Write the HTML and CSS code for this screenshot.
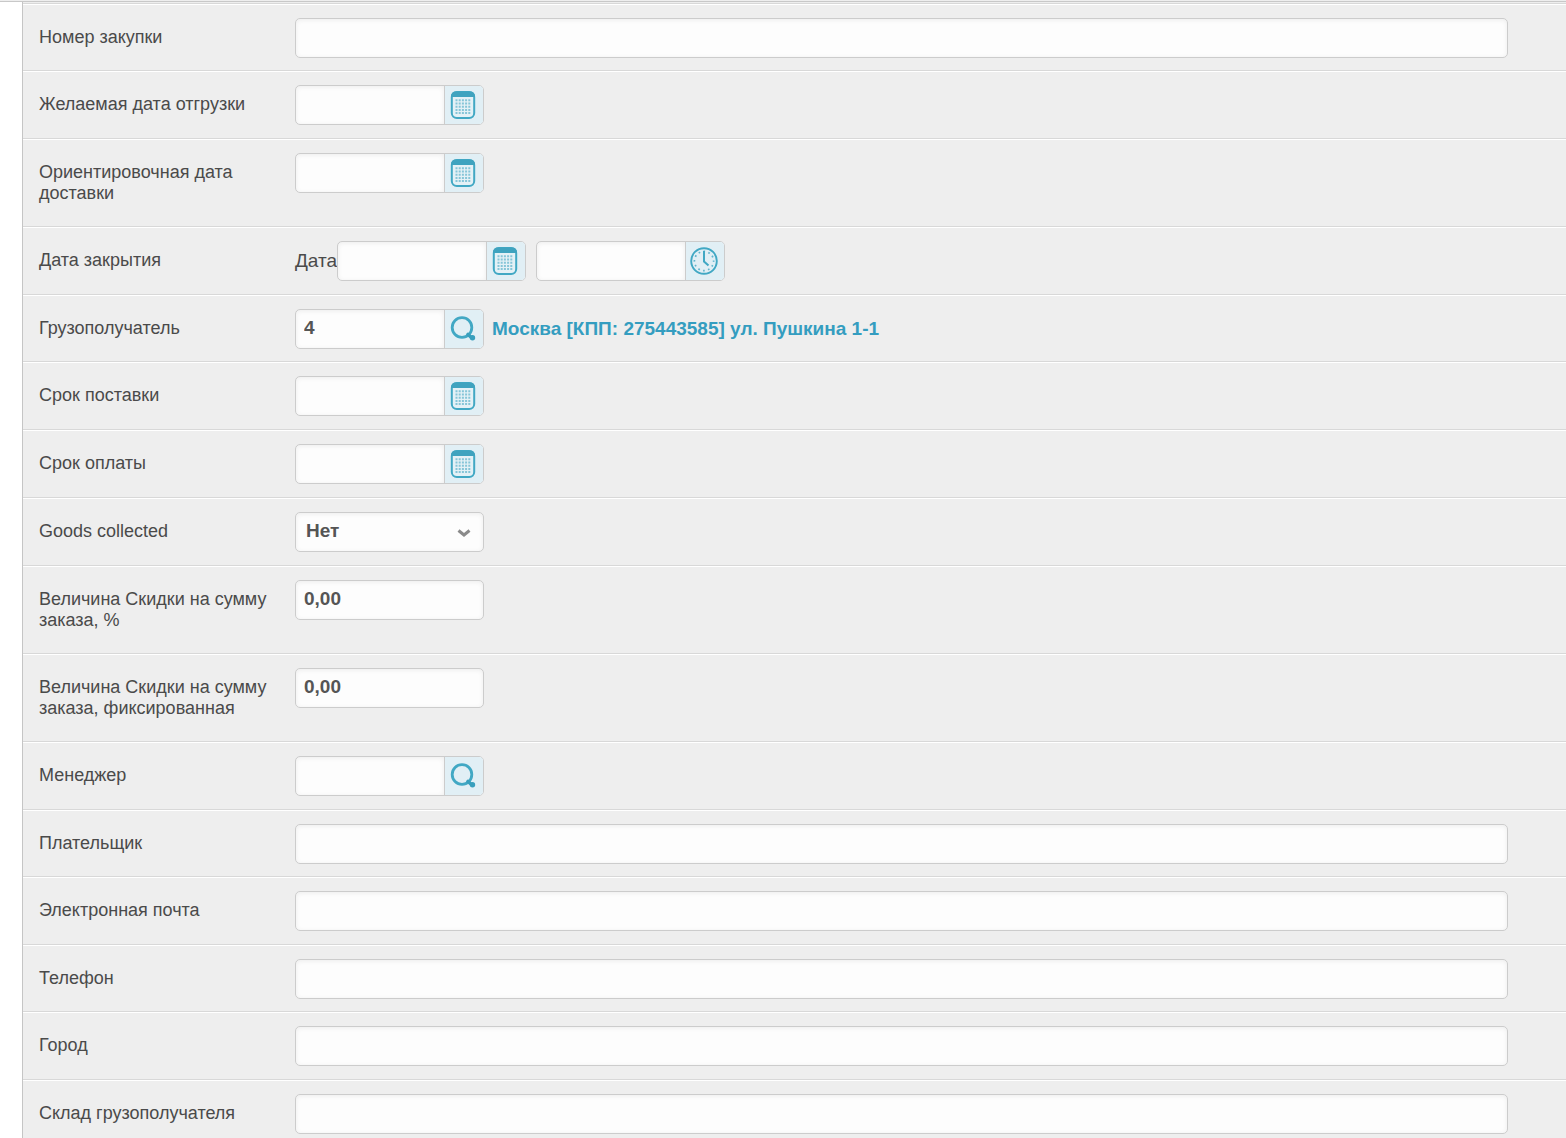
FILE: index.html
```
<!DOCTYPE html>
<html lang="ru">
<head>
  <meta charset="UTF-8">
  <meta name="viewport" content="width=device-width, initial-scale=1.0">
  <title>Заказ</title>
  <link rel="stylesheet" href="styles.css">
</head>
<body>

<svg class="sprite" aria-hidden="true">
  <defs>
    <symbol id="icon-calendar" viewBox="0 0 28 28">
      <rect x="2.8" y="1" width="22.4" height="26" rx="5" fill="#e4f1f6" stroke="#41a8c4" stroke-width="2"/>
      <path d="M2 6V5a4.500 4.500 0 0 1 4.500-4.500h15a4.500 4.500 0 0 1 4.500 4.500v1z" fill="#3fa3bf"/>
      <path d="M6.500 9.300h15M6.500 12.500h15M6.500 15.700h15M6.500 18.900h15M6.500 22.100h15" fill="none" stroke="#86c5d8" stroke-width="2" stroke-dasharray="2 1.200"/>
    </symbol>
    <symbol id="icon-clock" viewBox="0 0 28 28">
      <circle cx="14" cy="14" r="12.800" fill="none" stroke="#41a8c4" stroke-width="1.900"/>
      <circle cx="14" cy="14" r="9.600" fill="none" stroke="#62b4cc" stroke-width="1.700" stroke-dasharray="1.700 3.327" stroke-dashoffset="0.850"/>
      <path d="M14 4v10.500l4.500 4" fill="none" stroke="#41a8c4" stroke-width="2"/>
    </symbol>
    <symbol id="icon-search" viewBox="0 0 28 28">
      <circle cx="13" cy="12.500" r="9.800" fill="none" stroke="#41a8c4" stroke-width="2.800"/>
      <path d="M19 19.500l4 3.500" fill="none" stroke="#389fbd" stroke-width="3.600" stroke-linecap="round"/>
      <circle cx="23.500" cy="22.800" r="2.700" fill="#389fbd"/>
    </symbol>
  </defs>
</svg>

<div class="top-line"></div>

<form class="order-form">
  <div class="form-row compact">
    <label class="row-label" for="purchaseNumber">Номер закупки</label>
    <div class="row-field"><input type="text" id="purchaseNumber" class="text-input wide"></div>
  </div>

  <div class="form-row">
    <label class="row-label" for="shipDate">Желаемая дата отгрузки</label>
    <div class="row-field">
      <div class="input-group">
        <input type="text" id="shipDate">
        <button type="button" aria-label="Выбрать дату"><svg><use href="#icon-calendar"/></svg></button>
      </div>
    </div>
  </div>

  <div class="form-row">
    <label class="row-label" for="deliveryDate">Ориентировочная дата доставки</label>
    <div class="row-field">
      <div class="input-group">
        <input type="text" id="deliveryDate">
        <button type="button" aria-label="Выбрать дату"><svg><use href="#icon-calendar"/></svg></button>
      </div>
    </div>
  </div>

  <div class="form-row">
    <label class="row-label" for="closeDate">Дата закрытия</label>
    <div class="row-field">
      <label class="field-prefix" for="closeDate">Дата</label>
      <div class="input-group">
        <input type="text" id="closeDate">
        <button type="button" aria-label="Выбрать дату"><svg><use href="#icon-calendar"/></svg></button>
      </div>
      <div class="input-group time">
        <input type="text" id="closeTime" aria-label="Время закрытия">
        <button type="button" aria-label="Выбрать время"><svg><use href="#icon-clock"/></svg></button>
      </div>
    </div>
  </div>

  <div class="form-row compact">
    <label class="row-label" for="consignee">Грузополучатель</label>
    <div class="row-field">
      <div class="input-group">
        <input type="text" id="consignee" value="4">
        <button type="button" aria-label="Найти"><svg><use href="#icon-search"/></svg></button>
      </div>
      <a href="#" class="consignee-link">Москва [КПП: 275443585] ул. Пушкина 1-1</a>
    </div>
  </div>

  <div class="form-row">
    <label class="row-label" for="supplyTerm">Срок поставки</label>
    <div class="row-field">
      <div class="input-group">
        <input type="text" id="supplyTerm">
        <button type="button" aria-label="Выбрать дату"><svg><use href="#icon-calendar"/></svg></button>
      </div>
    </div>
  </div>

  <div class="form-row">
    <label class="row-label" for="paymentTerm">Срок оплаты</label>
    <div class="row-field">
      <div class="input-group">
        <input type="text" id="paymentTerm">
        <button type="button" aria-label="Выбрать дату"><svg><use href="#icon-calendar"/></svg></button>
      </div>
    </div>
  </div>

  <div class="form-row">
    <label class="row-label" for="goodsCollected">Goods collected</label>
    <div class="row-field">
      <div class="select-box">
        <select id="goodsCollected">
          <option selected>Нет</option>
          <option>Да</option>
        </select>
        <svg class="chevron" viewBox="0 0 14 10"><path d="M1.500 2.500l5.500 4.500 5.500-4.500" fill="none" stroke="#8a8a8a" stroke-width="3"/></svg>
      </div>
    </div>
  </div>

  <div class="form-row">
    <label class="row-label" for="discountPercent">Величина Скидки на сумму заказа, %</label>
    <div class="row-field"><input type="text" id="discountPercent" class="text-input" value="0,00"></div>
  </div>

  <div class="form-row">
    <label class="row-label" for="discountFixed">Величина Скидки на сумму заказа, фиксированная</label>
    <div class="row-field"><input type="text" id="discountFixed" class="text-input" value="0,00"></div>
  </div>

  <div class="form-row">
    <label class="row-label" for="manager">Менеджер</label>
    <div class="row-field">
      <div class="input-group">
        <input type="text" id="manager">
        <button type="button" aria-label="Найти"><svg><use href="#icon-search"/></svg></button>
      </div>
    </div>
  </div>

  <div class="form-row compact">
    <label class="row-label" for="payer">Плательщик</label>
    <div class="row-field"><input type="text" id="payer" class="text-input wide"></div>
  </div>

  <div class="form-row">
    <label class="row-label" for="email">Электронная почта</label>
    <div class="row-field"><input type="text" id="email" class="text-input wide"></div>
  </div>

  <div class="form-row compact">
    <label class="row-label" for="phone">Телефон</label>
    <div class="row-field"><input type="text" id="phone" class="text-input wide"></div>
  </div>

  <div class="form-row">
    <label class="row-label" for="city">Город</label>
    <div class="row-field"><input type="text" id="city" class="text-input wide"></div>
  </div>

  <div class="form-row">
    <label class="row-label" for="warehouse">Склад грузополучателя</label>
    <div class="row-field"><input type="text" id="warehouse" class="text-input wide"></div>
  </div>
</form>

</body>
</html>
```
FILE: styles.css
```
* {
  box-sizing: border-box;
}

body {
  margin: 0;
  background: #fff;
  color: #4a4a4a;
  font-family: "Liberation Sans", Arial, sans-serif;
  font-size: 18px;
}

.sprite {
  display: none;
}

.top-line {
  height: 2px;
  background: #eee;
  border-bottom: 1px solid #c8c8c8;
}

.order-form {
  margin-left: 22px;
  padding-top: 2px;
  background: #eee;
  border-left: 1px solid #c5c5c5;
}

.form-row {
  display: flex;
  align-items: flex-start;
  padding: 0 58px 0 16px;
  border-top: 1px solid #fff;
  border-bottom: 1px solid #d8d8d8;
}

.form-row:first-child {
  box-shadow: 0 -1px #d8d8d8;
}

.row-label {
  flex: none;
  width: 256px;
  padding: 22px 24px 22px 0;
  line-height: 21px;
}

.row-field {
  flex: 1;
  display: flex;
  align-items: center;
  padding: 13px 0;
}

.compact .row-label {
  padding-bottom: 21px;
}

.compact .row-field {
  padding-bottom: 12px;
}

.form-row:last-child {
  border-bottom: none;
}

.form-row:last-child .row-label,
.form-row:last-child .row-field {
  padding-bottom: 4px;
}

.text-input, .input-group, .select-box {
  width: 189px;
  height: 40px;
  border: 1px solid #ccc;
  border-radius: 5px;
  background: #fdfdfd;
}

input, select {
  color: #555;
  font-family: inherit;
  font-size: 19px;
  font-weight: bold;
  padding: 0 8px 2px;
  outline: none;
}

.text-input, .input-group input, .select-box {
  box-shadow: inset 0 1px 5px rgba(0, 0, 0, 0.07);
}

.text-input.wide {
  width: 100%;
}

.input-group {
  display: flex;
  overflow: hidden;
}

.input-group input {
  flex: 1;
  min-width: 0;
  border: none;
  background: transparent;
}

.input-group button {
  display: flex;
  align-items: center;
  justify-content: center;
  width: 39px;
  padding: 0 2px 1px 0;
  border: none;
  border-left: 1px solid #ccc;
  background: #e1eff5;
  cursor: pointer;
}

.input-group button svg {
  width: 28px;
  height: 28px;
}

.input-group.time {
  margin-left: 10px;
}

.field-prefix {
  font-size: 19px;
}

.consignee-link {
  margin-left: 8px;
  color: #349dc0;
  font-size: 19px;
  font-weight: bold;
  text-decoration: none;
}

.consignee-link:hover {
  text-decoration: underline;
}

.select-box {
  position: relative;
}

.select-box select {
  width: 100%;
  height: 100%;
  padding: 0 10px 3px;
  border: none;
  background: transparent;
  appearance: none;
}

.chevron {
  position: absolute;
  top: 15px;
  right: 12px;
  width: 14px;
  height: 10px;
  pointer-events: none;
}
```
